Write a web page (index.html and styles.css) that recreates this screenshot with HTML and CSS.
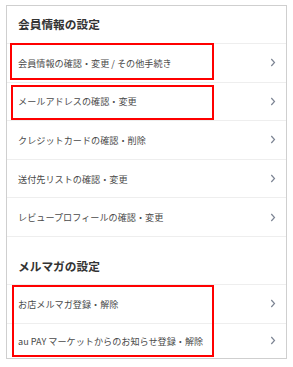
FILE: index.html
```html
<!DOCTYPE html>
<html lang="ja">
<head>
<meta charset="utf-8">
<link rel="stylesheet" href="styles.css">
</head>
<body>
<div class="card">
  <div class="heading h1">会員情報の設定</div>
  <div class="row"><span>会員情報の確認・変更 / その他手続き</span><svg class="chev" width="6" height="9" viewBox="0 0 6 9"><polyline points="1.3,1 4.5,4.5 1.3,8"/></svg></div>
  <div class="row"><span>メールアドレスの確認・変更</span><svg class="chev" width="6" height="9" viewBox="0 0 6 9"><polyline points="1.3,1 4.5,4.5 1.3,8"/></svg></div>
  <div class="row"><span>クレジットカードの確認・削除</span><svg class="chev" width="6" height="9" viewBox="0 0 6 9"><polyline points="1.3,1 4.5,4.5 1.3,8"/></svg></div>
  <div class="row"><span>送付先リストの確認・変更</span><svg class="chev" width="6" height="9" viewBox="0 0 6 9"><polyline points="1.3,1 4.5,4.5 1.3,8"/></svg></div>
  <div class="row"><span>レビュープロフィールの確認・変更</span><svg class="chev" width="6" height="9" viewBox="0 0 6 9"><polyline points="1.3,1 4.5,4.5 1.3,8"/></svg></div>
  <div class="heading h2">メルマガの設定</div>
  <div class="row"><span>お店メルマガ登録・解除</span><svg class="chev" width="6" height="9" viewBox="0 0 6 9"><polyline points="1.3,1 4.5,4.5 1.3,8"/></svg></div>
  <div class="row last"><span>au PAY マーケットからのお知らせ登録・解除</span><svg class="chev" width="6" height="9" viewBox="0 0 6 9"><polyline points="1.3,1 4.5,4.5 1.3,8"/></svg></div>
</div>
<div class="mark mark1"></div>
<div class="mark mark2"></div>
<div class="mark mark3"></div>
</body>
</html>
```

FILE: styles.css
```css
html, body {
  margin: 0;
  padding: 0;
  background: #ffffff;
}
body {
  position: relative;
  width: 293px;
  height: 367px;
  overflow: hidden;
  font-family: "Noto Sans CJK JP", "Noto Sans", sans-serif;
}
.card {
  margin: 5px 0 0 6px;
  width: 279px;
  border: 1px solid #cfcfcf;
  background: #fff;
}
.heading {
  font-size: 11.7px;
  font-weight: bold;
  color: #333;
  line-height: 17px;
  padding-left: 11px;
  box-sizing: border-box;
}
.h1 {
  height: 37px;
  padding-top: 9px;
}
.h2 {
  height: 48px;
  padding-top: 20px;
  border-top: 1px solid #eeeeee;
}
.row {
  display: flex;
  align-items: center;
  justify-content: space-between;
  height: 38.6px;
  box-sizing: border-box;
  border-top: 1px solid #eeeeee;
  padding: 0 10px 0 11px;
  font-size: 9.15px;
  color: #4a4a4a;
}
.row.last {
  height: 35px;
}
.chev {
  display: block;
}
.chev polyline {
  fill: none;
  stroke: #7d8594;
  stroke-width: 1.2;
}
.mark {
  position: absolute;
  border: 2px solid #ff0000;
  box-sizing: border-box;
}
.mark1 { left: 10px; top: 43px; width: 204px; height: 37px; }
.mark2 { left: 11px; top: 85px; width: 203px; height: 35px; }
.mark3 { left: 12px; top: 285px; width: 202px; height: 72px; }
```
